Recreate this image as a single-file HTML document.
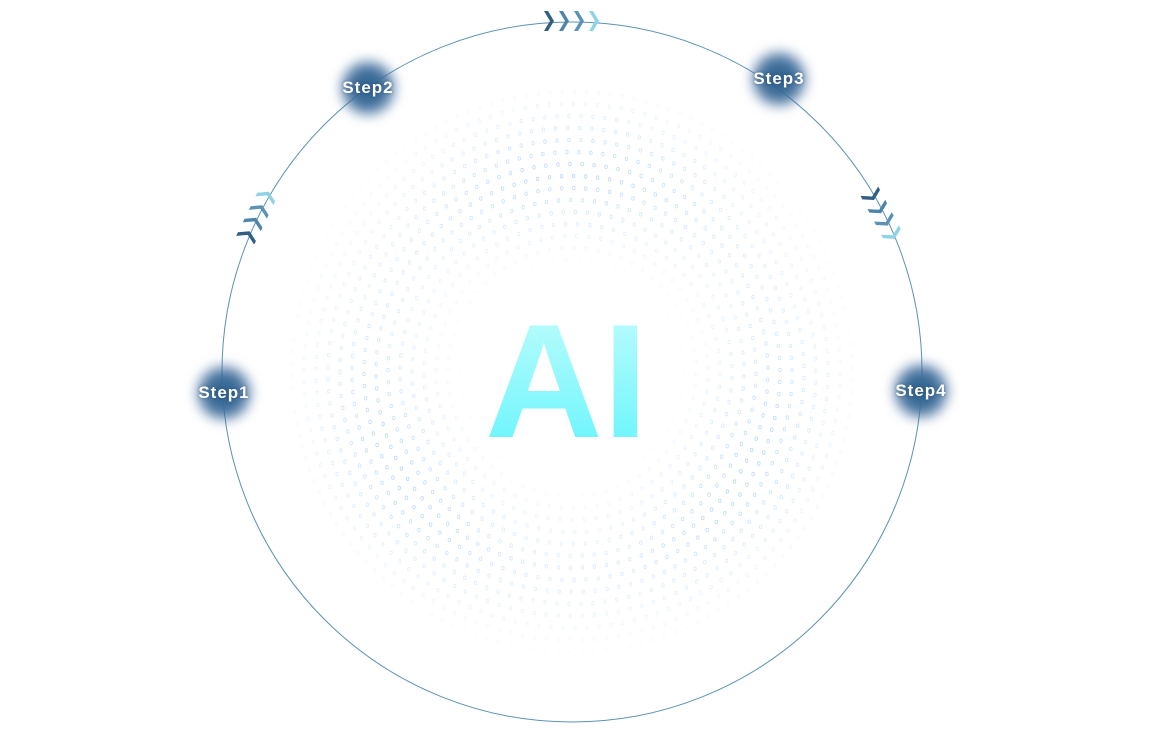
<!DOCTYPE html>
<html><head><meta charset="utf-8"><style>
html,body{margin:0;padding:0;background:#fff;width:1176px;height:743px;overflow:hidden;position:relative;font-family:"Liberation Sans",sans-serif}
.step{position:absolute;z-index:2;isolation:isolate;width:64px;height:64px;margin:-32px 0 0 -32px;color:#fff;font-weight:bold;font-size:17px;letter-spacing:1px;display:flex;align-items:center;justify-content:center;text-shadow:0 0 3px rgba(30,60,100,.6)}
.step:before{content:"";position:absolute;left:5px;top:5px;width:54px;height:54px;border-radius:50%;background:radial-gradient(circle,#2f5f8c 0%,#3a6c98 40%,rgba(70,110,160,.7) 70%,rgba(120,150,200,.3) 100%);filter:blur(6px);z-index:-1}
.step span{position:relative}
svg{position:absolute;left:0;top:0;z-index:1}
</style></head><body>
<svg width="1176" height="743" id="s">
<defs>
<linearGradient id="ag" x1="0" y1="0" x2="0" y2="1"><stop offset="0" stop-color="#c6fdfd"/><stop offset="1" stop-color="#5ef4fb"/></linearGradient>
<polygon id="ch" points="-5,-10 -1,-10 5,0 -1,10 -5,10 1,0"/>
</defs>
<g id="dots"></g>
<circle cx="572" cy="372" r="350" fill="none" stroke="#5a93b3" stroke-width="1"/>
<text x="485" y="437" font-family="Liberation Sans,sans-serif" font-weight="bold" font-size="162" fill="url(#ag)" textLength="163" lengthAdjust="spacingAndGlyphs">AI</text>
<g transform="translate(573,21)">
<use href="#ch" x="-24" fill="#2f5f85"/><use href="#ch" x="-9" fill="#4d85aa"/><use href="#ch" x="6" fill="#5b93b6"/><use href="#ch" x="21" fill="#8fd3e6"/>
</g>
<g transform="translate(257,216) rotate(-64)">
<use href="#ch" x="-22" fill="#2f5f85"/><use href="#ch" x="-7" fill="#4d85aa"/><use href="#ch" x="7" fill="#5b93b6"/><use href="#ch" x="22" fill="#8fd3e6"/>
</g>
<g transform="translate(882,215) rotate(62)">
<use href="#ch" x="-22" fill="#2f5f85"/><use href="#ch" x="-7" fill="#4d85aa"/><use href="#ch" x="7" fill="#5b93b6"/><use href="#ch" x="22" fill="#8fd3e6"/>
</g>
</svg>
<div class="step" style="left:224px;top:393px"><span>Step1</span></div>
<div class="step" style="left:368px;top:88px"><span>Step2</span></div>
<div class="step" style="left:779px;top:79px"><span>Step3</span></div>
<div class="step" style="left:921px;top:391px"><span>Step4</span></div>
<script>
var g=document.getElementById('dots'),h='';
for(var r=100;r<290;r+=12){var n=Math.floor(2*Math.PI*r/12);
var a0=r*0.031;
var op=Math.max(0,1-Math.abs(r-200)/95);op=op*0.5;
for(var i=0;i<n;i++){var a=a0+i*2*Math.PI/n;var x=572+r*Math.cos(a),y=372+r*Math.sin(a);
var o=op*(0.75+0.25*Math.sin(a*3));
h+='<ellipse cx="'+x.toFixed(1)+'" cy="'+y.toFixed(1)+'" rx="1.3" ry="1.8" fill="none" stroke="#6fb0e8" stroke-width="0.8" opacity="'+o.toFixed(2)+'"/>';}}
g.innerHTML=h;
</script>
</body></html>
